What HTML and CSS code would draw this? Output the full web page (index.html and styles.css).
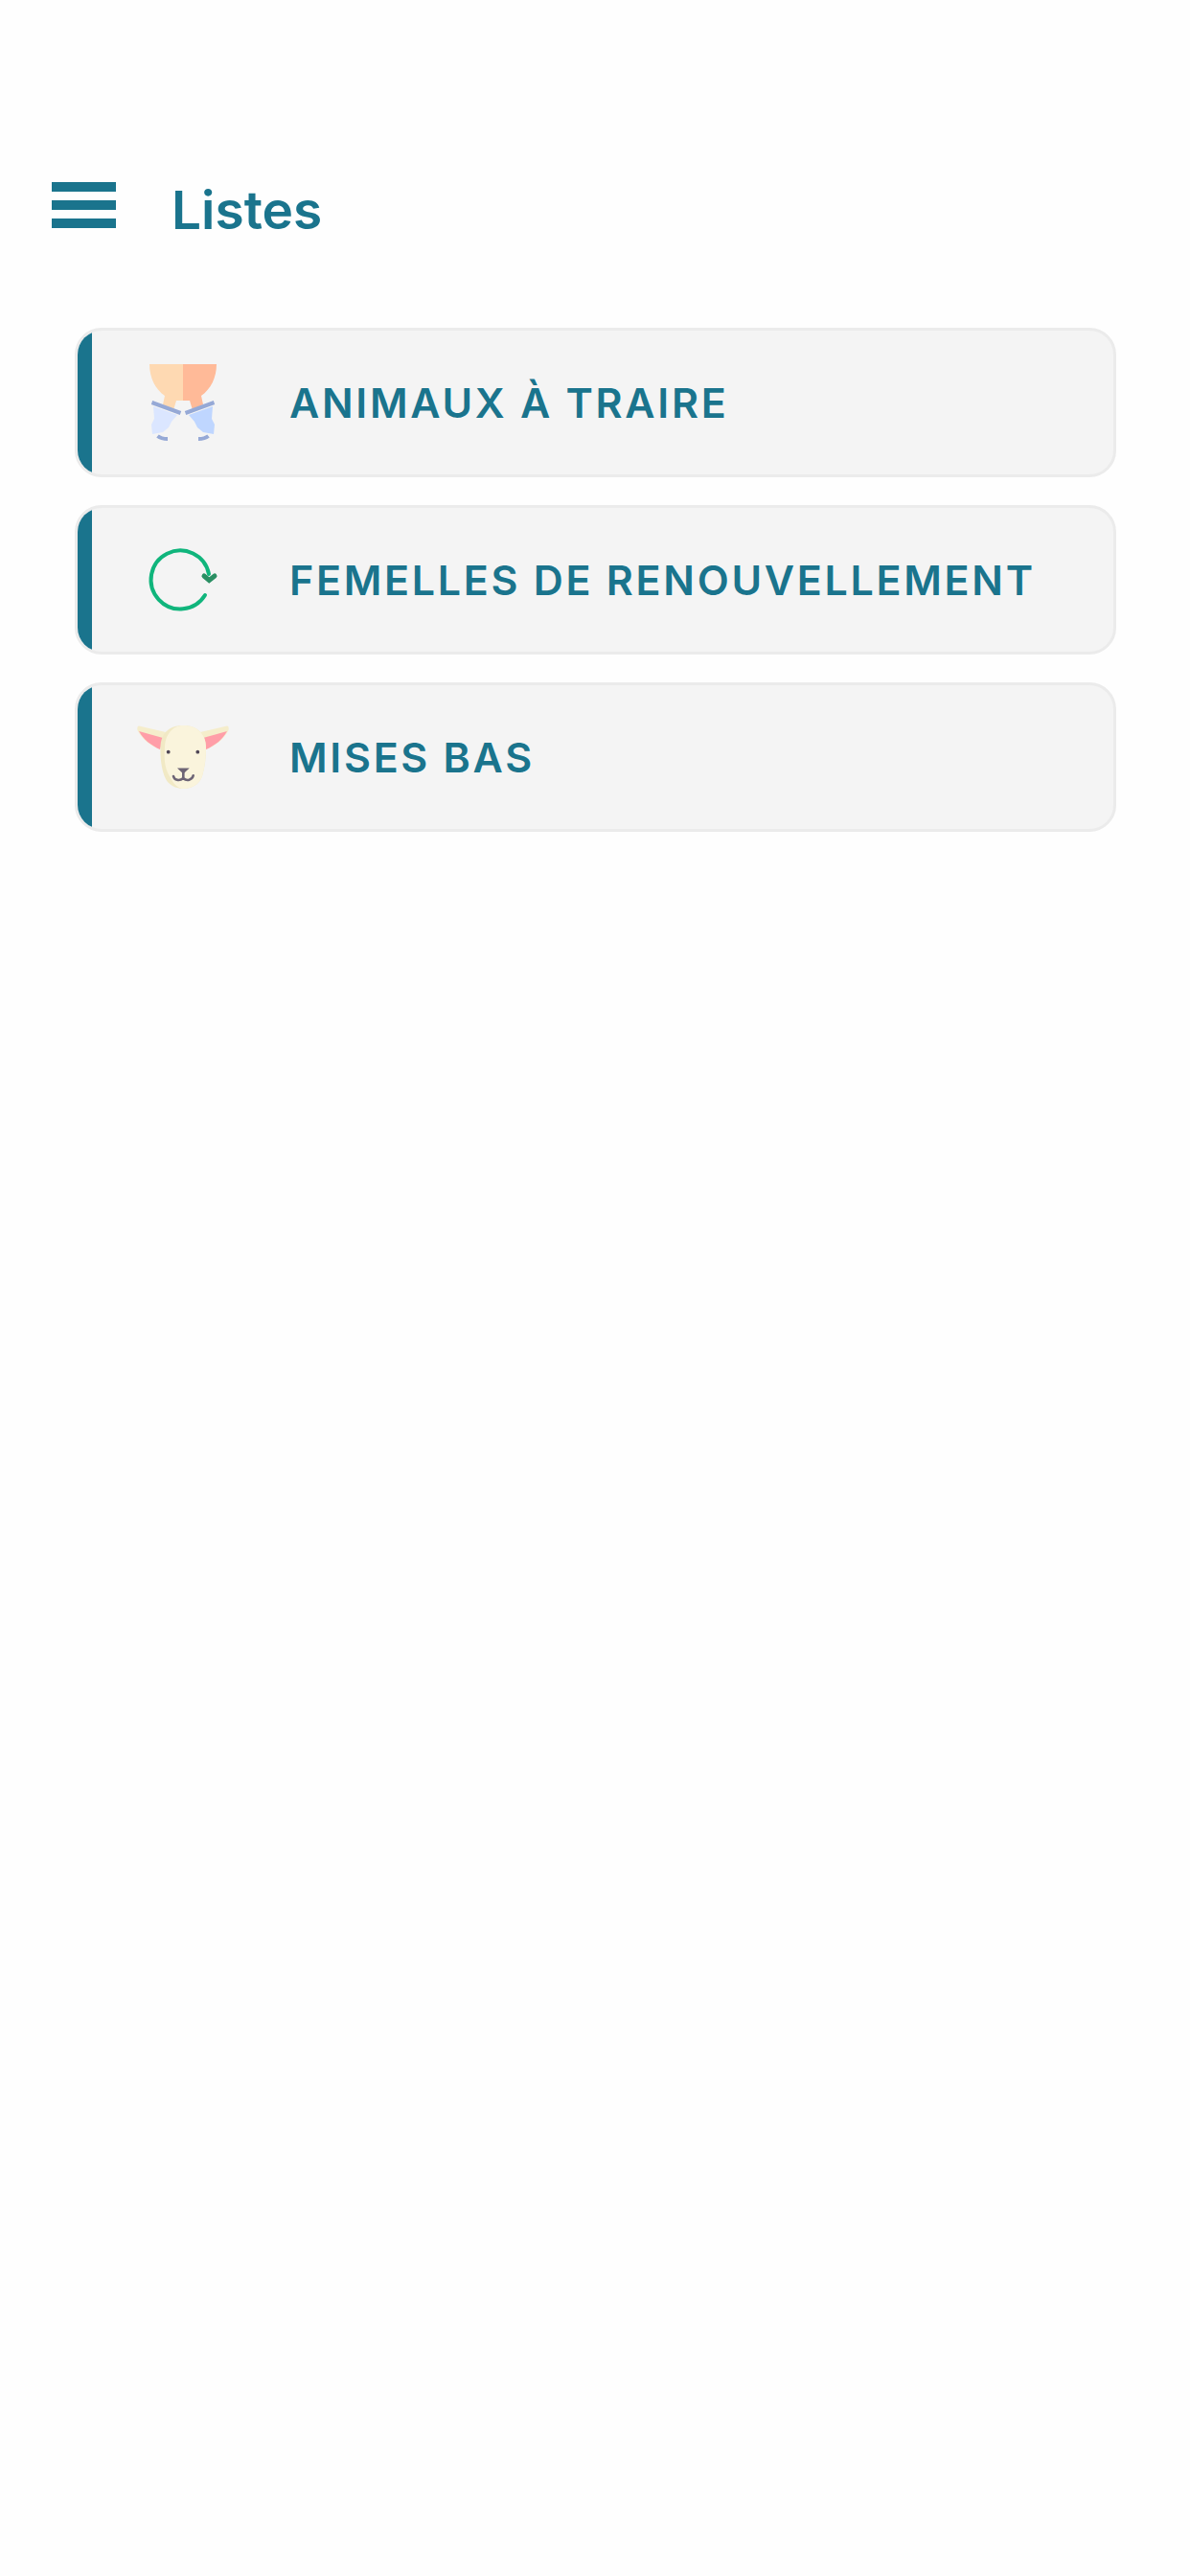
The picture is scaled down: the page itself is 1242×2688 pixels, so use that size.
FILE: index.html
```html
<!DOCTYPE html>
<html lang="fr">
<head>
  <meta charset="UTF-8">
  <title>Listes</title>
  <link rel="stylesheet" href="styles.css">
</head>
<body>

<header class="topbar">
  <div class="burger"><span></span><span></span><span></span></div>
  <h1>Listes</h1>
</header>

<main class="lists">
  <a class="card">
    <div class="card-bar"></div>
    <div class="card-icon">
      <svg width="96" height="96" viewBox="0 0 96 96">
        <path fill="#fed9b2" d="M13 8H48V46H41L38 56 27 50 29 41C19 34 13 22 13 8Z"/>
        <path fill="#ffba98" d="M83 8H48V46H55L58 56 69 50 67 41C77 34 83 22 83 8Z"/>
        <path fill="#dbe6ff" d="M17 52L42 61 36 68 33 74 27 79 16 81 15 71 18 65Z"/>
        <path fill="#bfd6ff" d="M79 52L54 61 60 68 63 74 69 79 80 81 81 71 78 65Z"/>
        <g fill="none" stroke="#96a9d6" stroke-width="4">
          <path d="M15.500 48L45.500 59M80.500 48L50.500 59"/>
          <path d="M21.500 83C24 85 27 86 32 86M74.500 83C72 85 69 86 64 86"/>
        </g>
      </svg>
    </div>
    <span class="card-label">ANIMAUX À TRAIRE</span>
  </a>

  <a class="card">
    <div class="card-bar"></div>
    <div class="card-icon">
      <svg width="96" height="96" viewBox="0 0 96 96">
        <path fill="none" stroke="#10b57c" stroke-width="4" stroke-linecap="round" d="M71 64A30.500 30.500 0 1 1 75 42"/>
        <path fill="none" stroke="#2a8f63" stroke-width="5" stroke-linecap="round" d="M70 44L75.300 48.500 81 44"/>
      </svg>
    </div>
    <span class="card-label">FEMELLES DE RENOUVELLEMENT</span>
  </a>

  <a class="card">
    <div class="card-bar"></div>
    <div class="card-icon">
      <svg width="96" height="96" viewBox="0 0 96 96">
        <path fill="#f5edcb" d="M2 15.500L30 22 24 40C14 36 5 29 0.500 20 0 17 0.500 15.500 2 15.500Z"/>
        <path fill="#f5edcb" d="M94 15.500L66 22 72 40C82 36 91 29 95.500 20 96 17 95.500 15.500 94 15.500Z"/>
        <path fill="#ff9ea8" d="M2 21L27 28 24 40C15 36 7 30 2 21Z"/>
        <path fill="#ff9ea8" d="M94 21L69 28 72 40C81 36 89 30 94 21Z"/>
        <path fill="#f1e9c5" d="M48 15C33 15 24.500 24 24.500 38 24 50 26 66 32 74 37 79 43 81 48 81 58 81 65 76 68 68 71 58 72 47 72 38 72 24 63 15 48 15Z"/>
        <path fill="#faf4dc" d="M48 15C38 15 29 24 29 38 28 50 29 60 34 68 38 76 43 81 48 81 58 81 65 76 68 68 71 58 72 47 72 38 72 24 63 15 48 15Z"/>
        <circle fill="#4f4656" cx="32.700" cy="42.700" r="1.900"/>
        <circle fill="#4f4656" cx="63.300" cy="42.700" r="1.900"/>
        <path fill="#6d6475" d="M42 59.500H54.700L48.300 65.500Z"/>
        <path fill="none" stroke="#6d6475" stroke-width="2.600" stroke-linecap="round" d="M38 68C39 72 44 73.500 48.300 70 52 73.500 57.500 72 58.700 67.300M48.300 64V70"/>
      </svg>
    </div>
    <span class="card-label">MISES BAS</span>
  </a>
</main>

</body>
</html>
```

FILE: styles.css
```css
* { box-sizing: border-box; }
body { margin: 0; min-height: 2688px; background: #fefefe; font-family: Inter, "Noto Sans", sans-serif; color: #1a748d; }

.topbar { display: flex; align-items: center; padding: 190px 0 0 54px; height: 238px; }
.burger { display: flex; flex-direction: column; gap: 9px; width: 67px; }
.burger span { display: block; height: 10px; background: #1a748d; }
h1 { margin: 10px 0 0 58px; font-size: 55px; font-weight: 600; line-height: 48px; }

.lists { display: flex; flex-direction: column; gap: 29px; padding: 104px 77px 0 78px; }
.card {
  display: flex; align-items: center; height: 156px; overflow: hidden;
  background: #f4f4f4; border: 3px solid #ebebeb; border-radius: 28px;
}
.card-bar { width: 15px; height: 100%; background: #1a748d; flex-shrink: 0; }
.card-icon { display: flex; justify-content: center; width: 190px; flex-shrink: 0; }
.card-label { margin-left: 16px; font-size: 43px; font-weight: 600; letter-spacing: 2.7px; white-space: nowrap; }
```
